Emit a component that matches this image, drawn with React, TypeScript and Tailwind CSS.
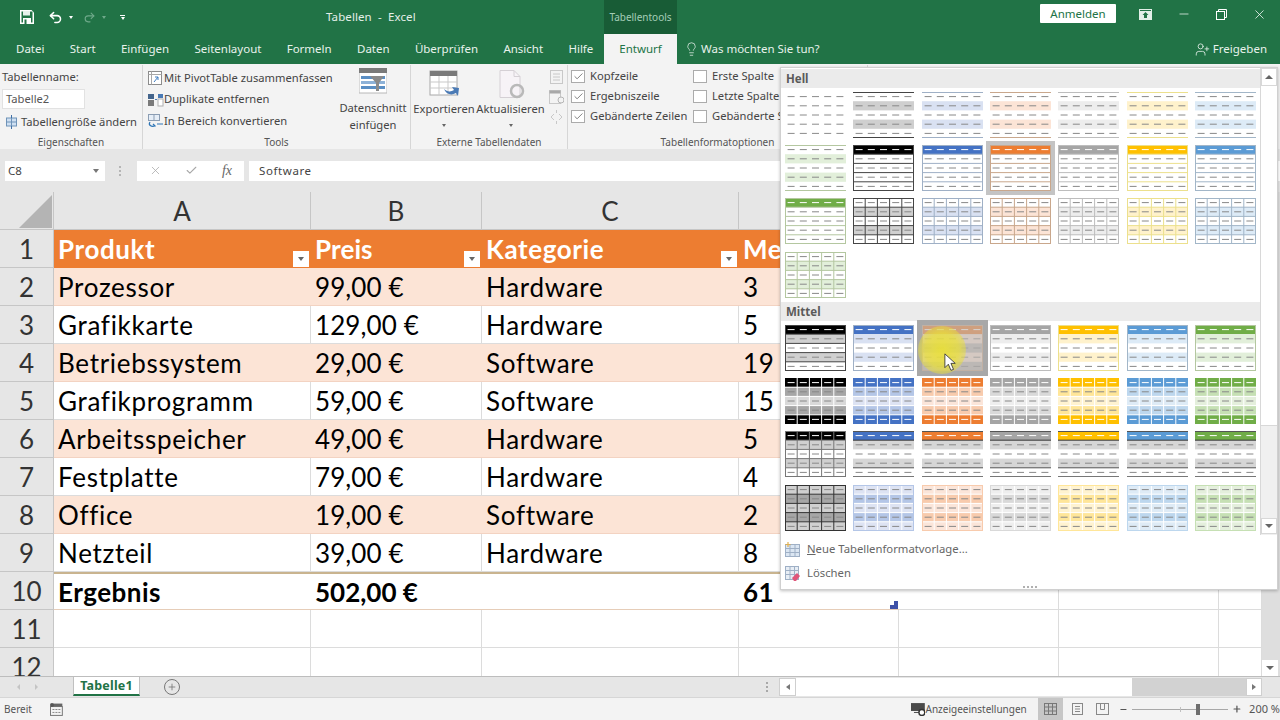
import { Minus, Plus, X, Lightbulb, UserPlus, Check, Undo2, Redo2 } from "lucide-react";
import type { ReactNode } from "react";

type Tone = { head: string; band: string; mid: string; pale: string; line: string };

const TONES: Record<string, Tone> = {
  black: { head: "#000000", band: "#d0d0d0", mid: "#a6a6a6", pale: "#d9d9d9", line: "#454545" },
  blue: { head: "#4472c4", band: "#d9e1f2", mid: "#b4c6e7", pale: "#dde3f3", line: "#9fb0c6" },
  orange: { head: "#ed7d31", band: "#fce4d6", mid: "#f8cbad", pale: "#fbe5d9", line: "#c9a78c" },
  grey: { head: "#a5a5a5", band: "#ededed", mid: "#d9d9d9", pale: "#eeeeee", line: "#bdbdbd" },
  gold: { head: "#ffc000", band: "#fff2cc", mid: "#ffe699", pale: "#fff3d0", line: "#ece08d" },
  sky: { head: "#5b9bd5", band: "#ddebf7", mid: "#bdd7ee", pale: "#deebf6", line: "#a2b6c8" },
  green: { head: "#70ad47", band: "#e2efda", mid: "#c6e0b4", pale: "#e4efdc", line: "#b4c7a0" },
};

const ORDER = ["black", "blue", "orange", "grey", "gold", "sky", "green"];
const R = 9.2;

function Thumb({ tone, kind, dim }: { tone: string; kind: string; dim?: boolean }) {
  const t = TONES[tone];
  const black = tone === "black";
  let fills: (string | null)[] = [null, null, null, null, null];
  let hlines: [number, string][] = [];
  let vline: string | null = null;
  let box: string | null = null;
  let whiteHead = false;
  let whiteFoot = false;

  if (kind === "l1") {
    fills = [null, t.band, null, t.band, null];
    if (black) fills = [null, "#cfcfcf", null, "#cfcfcf", null];
    hlines = [[0.5, t.line], [45.5, t.line]];
  } else if (kind === "l2") {
    fills = [t.head, null, null, null, null];
    hlines = [R, R * 2, R * 3, R * 4].map((y) => [y, t.line] as [number, string]);
    box = t.line;
    whiteHead = true;
  } else if (kind === "l3") {
    fills = [null, t.band, null, t.band, null];
    if (black) fills = [null, "#d0d0d0", null, "#d0d0d0", null];
    hlines = [R, R * 2, R * 3, R * 4].map((y) => [y, t.line] as [number, string]);
    vline = t.line;
    box = t.line;
  } else if (kind === "m1") {
    fills = [t.head, t.band, null, t.band, null];
    if (black) hlines = [[R, "#454545"], [R * 2, "#454545"], [R * 3, "#454545"], [R * 4, "#454545"]];
    box = t.line;
    whiteHead = true;
  } else if (kind === "m2") {
    fills = [t.head, t.mid, t.pale, t.mid, t.head];
    hlines = [R, R * 2, R * 3, R * 4].map((y) => [y, "#ffffff"] as [number, string]);
    vline = "#ffffff";
    whiteHead = true;
    whiteFoot = true;
  } else if (kind === "m3") {
    if (black) {
      fills = [t.head, "#d0d0d0", null, "#d0d0d0", null];
      hlines = [R, R * 2, R * 3, R * 4].map((y) => [y, "#777777"] as [number, string]);
      vline = "#777777";
      box = "#777777";
      whiteHead = true;
    } else {
      fills = [t.head, "#d6d6d6", null, "#d6d6d6", null];
      hlines = [[0.5, "#555555"], [R, "#333333"], [R * 4, "#555555"], [45.5, "#777777"]];
      whiteHead = true;
    }
  } else if (kind === "m4") {
    fills = [t.pale, t.mid, t.pale, t.mid, t.pale];
    if (black) fills = ["#d0d0d0", "#a6a6a6", "#d0d0d0", "#a6a6a6", "#d0d0d0"];
    const l = black ? "#333333" : "#ffffff";
    hlines = [R, R * 2, R * 3, R * 4].map((y) => [y, l] as [number, string]);
    vline = l;
    box = black ? "#333333" : t.mid;
  }

  return (
    <svg width="61" height="46" viewBox="0 0 61 46" className={dim ? "opacity-40" : ""}>
      {fills.map((f, i) => f && <rect key={i} x="0" y={i * R} width="61" height={R} fill={f} />)}
      {hlines.map(([y, c], i) => <line key={i} x1="0" x2="61" y1={y} y2={y} stroke={c} strokeWidth="1" />)}
      {vline && [12.2, 24.4, 36.6, 48.8].map((x) => <line key={x} x1={x} x2={x} y1="0" y2="46" stroke={vline as string} strokeWidth="1" />)}
      {[0, 1, 2, 3, 4].map((i) =>
        [0, 1, 2, 3, 4].map((j) => (
          <line
            key={i + "-" + j}
            x1={2.6 + j * 12.2}
            x2={9.6 + j * 12.2}
            y1={i * R + 4.6}
            y2={i * R + 4.6}
            stroke={(i === 0 && whiteHead) || (i === 4 && whiteFoot) ? "#ffffff" : "#888888"}
            strokeWidth="1"
          />
        ))
      )}
      {box && <rect x="0.5" y="0.5" width="60" height="45" fill="none" stroke={box} strokeWidth="1" />}
    </svg>
  );
}

function Tile({ tone, kind, selected, hovered }: { tone: string; kind: string; selected?: boolean; hovered?: boolean }) {
  return (
    <div className="h-[53.3px] flex items-center justify-center">
      {selected ? (
        <div className="bg-white border-[4px] border-[#c4c4c4] flex"><Thumb tone={tone} kind={kind} /></div>
      ) : hovered ? (
        <div className="bg-[#bcb8b5] border-[5px] border-[#a8a8a8] flex"><Thumb tone={tone} kind={kind} dim /></div>
      ) : (
        <Thumb tone={tone} kind={kind} />
      )}
    </div>
  );
}

function PlainThumb() {
  return (
    <div className="h-[53.3px] flex items-center justify-center">
      <svg width="61" height="46" viewBox="0 0 61 46">
        {[0, 1, 2, 3, 4].map((i) =>
          [0, 1, 2, 3, 4].map((j) => (
            <line key={i + "-" + j} x1={2.6 + j * 12.2} x2={9.6 + j * 12.2} y1={i * R + 4.6} y2={i * R + 4.6} stroke="#8a8a8a" />
          ))
        )}
      </svg>
    </div>
  );
}

function SectionHead({ label }: { label: string }) {
  return <div className="h-[19px] bg-[#ebebeb] pl-[5px] text-[11.5px] leading-[19px] font-bold text-[#5a5a5a]">{label}</div>;
}

function Arrow({ dir }: { dir: "up" | "down" }) {
  return dir === "up" ? (
    <div className="w-0 h-0 border-x-[4px] border-x-transparent border-b-[4px] border-b-[#666666]" />
  ) : (
    <div className="w-0 h-0 border-x-[4px] border-x-transparent border-t-[4px] border-t-[#666666]" />
  );
}

function StylePicker() {
  return (
    <div className="absolute left-[780px] top-[67px] w-[498px] h-[523px] bg-white border border-[#d0d0d0] shadow-[0_1px_3px_rgba(0,0,0,0.25)] flex flex-col z-20">
      <div className="flex h-[467px]">
        <div className="w-[480px] pt-[1px]">
          <SectionHead label="Hell" />
          <div className="grid grid-cols-7 h-[214px] content-start">
            <PlainThumb />
            {ORDER.slice(0, 6).map((c) => <Tile key={c} tone={c} kind="l1" />)}
            <Tile tone="green" kind="l1" />
            {ORDER.slice(0, 6).map((c) => <Tile key={c} tone={c} kind="l2" selected={c === "orange"} />)}
            <Tile tone="green" kind="l2" />
            {ORDER.slice(0, 6).map((c) => <Tile key={c} tone={c} kind="l3" />)}
            <Tile tone="green" kind="l3" />
          </div>
          <SectionHead label="Mittel" />
          <div className="grid grid-cols-7">
            {ORDER.map((c) => <Tile key={c} tone={c} kind="m1" hovered={c === "orange"} />)}
            {ORDER.map((c) => <Tile key={c} tone={c} kind="m2" />)}
            {ORDER.map((c) => <Tile key={c} tone={c} kind="m3" />)}
            {ORDER.map((c) => <Tile key={c} tone={c} kind="m4" />)}
          </div>
        </div>
        <div className="w-[17px] flex flex-col border-l border-[#d8d8d8] bg-[#f0f0f0]">
          <div className="h-[18px] bg-white border border-[#d8d8d8] flex items-center justify-center"><Arrow dir="up" /></div>
          <div className="h-[340px] bg-white border-b border-[#d8d8d8]" />
          <div className="flex-1" />
          <div className="h-[16px] mb-[1px] bg-white border border-[#d8d8d8] flex items-center justify-center"><Arrow dir="down" /></div>
        </div>
      </div>
      <div className="flex-1 flex flex-col pt-[2px] text-[11.3px] text-[#666666]">
        <div className="h-[24px] flex items-center pl-[4px] gap-[7px]">
          <svg width="15" height="15" viewBox="0 0 15 15">
            <rect x="0.5" y="2.5" width="14" height="12" fill="#dbe6f2" stroke="#9fb0c6" />
            <path d="M0.5 6.5h14M0.5 10.5h14M5 2.5v12M10 2.5v12" stroke="#9fb0c6" />
            <path d="M3 0v5M0.5 2.5h5" stroke="#e0b050" strokeWidth="1.2" />
          </svg>
          <span><span className="underline">N</span>eue Tabellenformatvorlage...</span>
        </div>
        <div className="h-[24px] flex items-center pl-[4px] gap-[7px]">
          <svg width="15" height="15" viewBox="0 0 15 15">
            <rect x="0.5" y="0.5" width="13" height="13" fill="#e8eef5" stroke="#9fb0c6" />
            <path d="M0.5 4.5h13M0.5 8.5h13M5 0.5v13M9.5 0.5v13" stroke="#9fb0c6" fill="none" />
            <path d="M7 12l5-5 3 3-4 5H9z" fill="#e0567a" />
          </svg>
          <span>Löschen</span>
        </div>
        <div className="flex justify-center gap-[2px] pl-[1px] pt-[1px]">
          {[0, 1, 2, 3].map((i) => <div key={i} className="w-[2px] h-[2px] bg-[#b0b0b0]" />)}
        </div>
      </div>
    </div>
  );
}

function Cursor() {
  return (
    <>
      <div className="absolute left-[918px] top-[326px] w-[48px] h-[48px] rounded-full z-30 bg-[radial-gradient(circle,rgba(236,226,50,0.9)_0%,rgba(236,226,50,0.72)_50%,rgba(236,226,50,0)_100%)]" />
      <svg className="absolute left-[944px] top-[353px] z-40" width="13" height="19" viewBox="0 0 15 22">
        <path d="M1 1v16l4-4 3 7 3-1-3-7h5z" fill="#ffffff" stroke="#333333" strokeWidth="1" />
      </svg>
    </>
  );
}

function TitleBar() {
  return (
    <div className="h-[34px] flex text-white">
      <div className="w-[326px] flex items-center pl-[20px]">
        <svg width="14" height="14" viewBox="0 0 14 14">
          <path d="M0 0h11.5l2.5 2.5V14H0z" fill="#ffffff" />
          <rect x="1.5" y="1.5" width="11" height="11" fill="#217346" />
          <rect x="3" y="1" width="7" height="4.5" fill="#e8f2ec" />
          <rect x="3" y="8" width="8" height="6" fill="#ffffff" />
          <rect x="4.5" y="9.5" width="2" height="4.5" fill="#217346" />
        </svg>
        <Undo2 className="w-[15px] h-[15px] ml-[14px]" strokeWidth={2.5} />
        <div className="ml-[6px] w-0 h-0 border-x-[2.5px] border-x-transparent border-t-[3px] border-t-white" />
        <Redo2 className="w-[13px] h-[13px] ml-[10px] text-[#6fa98a]" strokeWidth={2} />
        <div className="ml-[6px] w-0 h-0 border-x-[2.5px] border-x-transparent border-t-[3px] border-t-[#6fa98a]" />
        <div className="ml-[14px] flex flex-col items-center gap-[1px]">
          <div className="w-[5px] h-[1px] bg-white" />
          <div className="w-0 h-0 border-x-[2.5px] border-x-transparent border-t-[3px] border-t-white" />
        </div>
      </div>
      <div className="w-[278px] flex items-center text-[11.5px] text-[#e4efe9] tracking-[0.1px] whitespace-pre">Tabellen  -  Excel</div>
      <div className="w-[73px] bg-[#185c36] flex items-center justify-center text-[10px] text-[#a4cdb6]">Tabellentools</div>
      <div className="w-[363px]" />
      <div className="w-[76px] h-[19px] mt-[4px] bg-white rounded-[1px] flex items-center justify-center text-[11.5px] text-[#217346]">Anmelden</div>
      <div className="flex-1 flex items-center justify-between pl-[23px] pr-[13px] pb-[6px]">
        <svg width="13" height="11" viewBox="0 0 13 11">
          <path d="M0 0h13v11H0z" fill="#e2efe8" />
          <path d="M6.5 3l3 3H8v3H5V6H3.5z" fill="#217346" />
          <path d="M1 1.5h11" stroke="#217346" />
        </svg>
        <Minus className="w-[14px] h-[14px]" strokeWidth={1.2} />
        <svg width="11" height="11" viewBox="0 0 11 11" fill="none" stroke="#ffffff">
          <rect x="0.5" y="2.5" width="8" height="8" fill="#217346" />
          <path d="M2.5 2.5v-2h8v8h-2" />
        </svg>
        <X className="w-[15px] h-[15px]" strokeWidth={1.2} />
      </div>
    </div>
  );
}

function TabBar() {
  const tabs = ["Datei", "Start", "Einfügen", "Seitenlayout", "Formeln", "Daten", "Überprüfen", "Ansicht", "Hilfe"];
  return (
    <div className="h-[30px] flex items-stretch text-[11.5px] text-[#e8f2ec]">
      <div className="w-[604px] flex items-center gap-[25.3px] pl-[16px]">
        {tabs.map((t) => <span key={t}>{t}</span>)}
      </div>
      <div className="w-[73px] bg-[#f3f3f3] flex items-center justify-center text-[#217346]">Entwurf</div>
      <div className="flex items-center pl-[7px]">
        <Lightbulb className="w-[15px] h-[18px]" strokeWidth={1.2} />
        <span className="ml-[2px]">Was möchten Sie tun?</span>
      </div>
      <div className="flex-1 flex items-center justify-end pr-[13px]">
        <UserPlus className="w-[15px] h-[15px] mr-[3px]" strokeWidth={1.3} />
        <span>Freigeben</span>
      </div>
    </div>
  );
}

function Group({ label, w, children }: { label: string; w: string; children: ReactNode }) {
  return (
    <div className={"flex flex-col border-r border-[#d6d6d6] h-[84px] shrink-0 " + w}>
      <div className="flex-1 flex min-h-0">{children}</div>
      <div className="h-[14px] text-center text-[10px] leading-[14px] text-[#555555] whitespace-nowrap overflow-hidden">{label}</div>
    </div>
  );
}

function CheckRow({ label, on }: { label: string; on: boolean }) {
  return (
    <div className="h-[20px] flex items-center whitespace-nowrap">
      <div className="w-[14px] h-[13px] border border-[#ababab] bg-white flex items-center justify-center">
        {on && <Check className="w-[11px] h-[11px] text-[#555555]" strokeWidth={1.6} />}
      </div>
      <span className="ml-[5px]">{label}</span>
    </div>
  );
}

function Ribbon() {
  return (
    <div className="h-[85px] bg-[#f3f3f3] pt-[1px] flex text-[11.2px] text-[#444444] overflow-hidden">
      <Group label="Eigenschaften" w="w-[143px]">
        <div className="flex flex-col pl-[2px] pt-[3px]">
          <div className="h-[18px] leading-[18px]">Tabellenname:</div>
          <div className="mt-[3px] w-[83px] h-[20px] bg-white border border-[#e2e2e2] pl-[3px] leading-[18px] text-[#555555]">Tabelle2</div>
          <div className="mt-[3px] flex items-center h-[20px] whitespace-nowrap">
            <svg className="ml-[3px] mr-[3px]" width="13" height="14" viewBox="0 0 13 14" fill="none">
              <rect x="1.5" y="3" width="10" height="8" fill="#cfe0f2" stroke="#6f93b8" />
              <path d="M1.5 7h10M6.5 3v8" stroke="#6f93b8" />
              <path d="M6.5 0v3M6.5 11v3" stroke="#3e6fa8" />
            </svg>
            Tabellengröße ändern
          </div>
        </div>
      </Group>
      <Group label="Tools" w="w-[268px]">
        <div className="flex flex-col pl-[4px] pt-[2px] w-[193px] whitespace-nowrap">
          <div className="h-[22px] flex items-center gap-[1px]">
            <svg width="16" height="14" viewBox="0 0 16 14" fill="none">
              <rect x="1.5" y="0.5" width="13" height="13" fill="#ffffff" stroke="#8c8c8c" />
              <path d="M1.5 3.5h13M4.5 0.5v13" stroke="#a8a8a8" />
              <path d="M7 11l4-5M11 6v3M11 6H8" stroke="#3e7cc0" />
            </svg>
            Mit PivotTable zusammenfassen
          </div>
          <div className="h-[21px] flex items-center">
            <svg width="17" height="14" viewBox="0 0 17 14">
              <rect x="1" y="1" width="6" height="5" fill="#43648c" />
              <rect x="1" y="7" width="6" height="6" fill="#7a7a7a" />
              <rect x="11" y="1" width="5" height="4" fill="#4a7ab5" />
              <rect x="11" y="6" width="5" height="7" fill="#ffffff" stroke="#b0b0b0" />
              <rect x="8" y="6" width="2" height="1" fill="#4a7ab5" />
            </svg>
            Duplikate entfernen
          </div>
          <div className="h-[22px] flex items-center">
            <svg width="17" height="14" viewBox="0 0 17 14" fill="none">
              <rect x="1.5" y="0.5" width="11" height="6" fill="#e6eef7" stroke="#8b9db3" />
              <path d="M7 0.5v6" stroke="#8b9db3" />
              <path d="M3 8c-2 3 1 5 5 4l-2-2M16 10H10" stroke="#2e75b6" strokeWidth="1.2" />
            </svg>
            In Bereich konvertieren
          </div>
        </div>
        <div className="w-[74px] flex flex-col items-center pt-[3px]">
          <svg width="28" height="26" viewBox="0 0 28 26">
            <rect x="0" y="0" width="28" height="25" fill="#ffffff" stroke="#b8b8b8" />
            <rect x="0" y="0" width="28" height="5" fill="#7a7a7a" />
            <rect x="2" y="8" width="24" height="3" fill="#5b8fc4" />
            <rect x="2" y="13" width="24" height="3" fill="#8db2d8" />
            <rect x="2" y="18" width="24" height="3" fill="#5b8fc4" />
            <path d="M11 8h14l-5 7v8h-3v-8z" fill="#8a8a8a" />
          </svg>
          <div className="text-center leading-[17px] mt-[5px]">Datenschnitt<br />einfügen</div>
        </div>
      </Group>
      <Group label="Externe Tabellendaten" w="w-[157px]">
        <div className="w-[66px] flex flex-col items-center pt-[5px]">
          <svg width="31" height="29" viewBox="0 0 31 29" fill="none">
            <rect x="1" y="1" width="27" height="24" fill="#ffffff" stroke="#a8a8a8" />
            <rect x="1" y="1" width="27" height="5" fill="#7a7a7a" />
            <path d="M1 12h27M1 18h27M10 6v19M19 6v19" stroke="#c9c9c9" />
            <path d="M15 19c3 3 7 3 10 1l-2-3 7 1-1 8-2-3c-5 3-10 1-12-4z" fill="#4a7ab5" />
          </svg>
          <div className="mt-[2px] leading-[16px]">Exportieren</div>
          <div className="mt-[7px] w-0 h-0 border-x-[2.5px] border-x-transparent border-t-[3px] border-t-[#666666]" />
        </div>
        <div className="w-[67px] flex flex-col items-center pt-[5px]">
          <svg width="28" height="29" viewBox="0 0 28 29" fill="none">
            <path d="M3 0.5h14l6 6v21H3z" fill="#f7f3f7" stroke="#d5d0d5" />
            <path d="M17 0.5v6h6" stroke="#d5d0d5" />
            <circle cx="20" cy="21" r="6" stroke="#b9b9b9" strokeWidth="2.5" />
          </svg>
          <div className="mt-[2px] leading-[16px]">Aktualisieren</div>
          <div className="mt-[7px] w-0 h-0 border-x-[2.5px] border-x-transparent border-t-[3px] border-t-[#666666]" />
        </div>
        <div className="flex flex-col gap-[6px] items-center pt-[5px] pl-[5px]">
          <svg width="13" height="14" viewBox="0 0 13 14" fill="none"><rect x="0.5" y="0.5" width="12" height="13" stroke="#c8c8c8" /><path d="M3 4h7M3 7h7M3 10h7" stroke="#c8c8c8" /></svg>
          <svg width="15" height="14" viewBox="0 0 15 14" fill="none"><rect x="0.5" y="0.5" width="11" height="13" stroke="#c8c8c8" /><rect x="0.5" y="0.5" width="11" height="3" fill="#a8a8a8" /><circle cx="12" cy="10" r="3" fill="#f3f3f3" stroke="#b5b5b5" /></svg>
          <svg width="13" height="14" viewBox="0 0 13 14" fill="none"><path d="M4 4L1 7l3 3M9 4l3 3-3 3M6.5 0v3M6.5 11v3" stroke="#c8c8c8" /></svg>
        </div>
      </Group>
      <Group label="Tabellenformatoptionen" w="w-[300px]">
        <div className="flex pl-[3px] pt-[1px] text-[#444444]">
          <div className="w-[122px]">
            <CheckRow label="Kopfzeile" on />
            <CheckRow label="Ergebniszeile" on />
            <CheckRow label="Gebänderte Zeilen" on />
          </div>
          <div>
            <CheckRow label="Erste Spalte" on={false} />
            <CheckRow label="Letzte Spalte" on={false} />
            <CheckRow label="Gebänderte Spalten" on={false} />
          </div>
        </div>
      </Group>
    </div>
  );
}

function FormulaBar() {
  return (
    <div className="h-[43px] bg-[#e6e6e6] flex items-center text-[11.5px] text-[#444444]">
      <div className="ml-[5px] w-[100px] h-[20px] bg-white flex items-center justify-between pl-[3px] pr-[6px]">
        C8
        <div className="w-0 h-0 border-x-[3.5px] border-x-transparent border-t-[4px] border-t-[#777777]" />
      </div>
      <div className="ml-[14px] flex flex-col gap-[2px]">
        {[0, 1, 2].map((i) => <div key={i} className="w-[2px] h-[2px] bg-[#b5b5b5]" />)}
      </div>
      <div className="ml-[16px] w-[107px] h-[20px] bg-white flex items-center justify-between pl-[12px] pr-[12px]">
        <X className="w-[13px] h-[13px] text-[#a8a8a8]" strokeWidth={1.4} />
        <Check className="w-[13px] h-[13px] text-[#a8a8a8]" strokeWidth={2} />
        <span className="font-['Liberation_Serif',serif] italic text-[14px] text-[#666666]">fx</span>
      </div>
      <div className="ml-[5px] flex-1 h-[20px] bg-white pl-[10px] leading-[20px] tracking-[0.6px]">Software</div>
    </div>
  );
}

const ROWS: [string, string, string, string][] = [
  ["Prozessor", "99,00 €", "Hardware", "3"],
  ["Grafikkarte", "129,00 €", "Hardware", "5"],
  ["Betriebssystem", "29,00 €", "Software", "19"],
  ["Grafikprogramm", "59,00 €", "Software", "15"],
  ["Arbeitsspeicher", "49,00 €", "Hardware", "5"],
  ["Festplatte", "79,00 €", "Hardware", "4"],
  ["Office", "19,00 €", "Software", "2"],
  ["Netzteil", "39,00 €", "Hardware", "8"],
];

// every sheet row is one fixed 38px track, the text line may be a bit taller
const COLS = "grid grid-rows-[38px] grid-cols-[54px_257px_171px_257px_160px_160px_160px_43px]";

function RowHead({ n }: { n: number }) {
  return <div className="bg-[#e6e6e6] border-b border-r border-[#c6c6c6] text-center text-[#333333] font-normal leading-[38px]">{n}</div>;
}

function FilterBtn() {
  return (
    <div className="absolute right-[2px] bottom-[1px] w-[16px] h-[16px] bg-white flex items-center justify-center">
      <div className="w-0 h-0 border-x-[3.5px] border-x-transparent border-t-[4px] border-t-[#666666]" />
    </div>
  );
}

function Sheet() {
  const plainCell = "border-r border-b border-[#dcdcdc] bg-white";
  return (
    <div className="flex h-[484px]">
      <div className="w-[1262px] overflow-hidden font-['Lato',sans-serif] text-[26px] text-black relative">
        <div className={COLS + " h-[38px] bg-[#e6e6e6] text-[#333333]"}>
          <div className="border-r border-b border-[#c6c6c6] flex items-end justify-end pr-[1px] pb-[1px]">
            <div className="w-0 h-0 border-l-[33px] border-l-transparent border-b-[33px] border-b-[#b4b4b4]" />
          </div>
          {["A", "B", "C", "D", "E", "F", "G"].map((c) => (
            <div key={c} className="border-r border-b border-[#c6c6c6] text-center leading-[38px]">{c}</div>
          ))}
        </div>
        <div className={COLS + " h-[38px] font-bold"}>
          <RowHead n={1} />
          {["Produkt", "Preis", "Kategorie", "Menge"].map((h, i) => (
            <div key={h} className={"relative bg-[#ed7d31] text-white pl-[4px] leading-[39px] overflow-hidden " + (i === 1 ? "tracking-[0.1px]" : "tracking-[0.6px]")}>
              {h}
              {i < 3 && <FilterBtn />}
            </div>
          ))}
          <div className={plainCell} /><div className={plainCell} /><div className={plainCell} />
        </div>
        {ROWS.map((r, i) => {
          const banded = i % 2 === 0;
          const cell = banded
            ? "bg-[#fce4d6] border-b border-[#f3d3c2] pl-[4px] leading-[39px] "
            : "bg-white border-b border-r border-[#dcdcdc] pl-[4px] leading-[39px] ";
          return (
            <div key={r[0]} className={COLS + " h-[38px]"}>
              <RowHead n={i + 2} />
              {r.map((v, j) => <div key={j} className={cell + (j === 1 ? "tracking-[0.1px]" : "tracking-[0.7px]")}>{v}</div>)}
              <div className={plainCell} /><div className={plainCell} /><div className={plainCell} />
            </div>
          );
        })}
        <div className={COLS + " h-[38px] font-bold"}>
          <RowHead n={10} />
          {["Ergebnis", "502,00 €", "", "61"].map((v, j) => (
            <div key={j} className={"bg-white border-t-[2px] border-b border-t-[#c9b48f] border-b-[#e6cdb8] pl-[4px] leading-[36px] " + (j === 1 ? "tracking-[0px]" : "tracking-[0.5px]")}>{v}</div>
          ))}
          <div className={plainCell} /><div className={plainCell} /><div className={plainCell} />
        </div>
        {[11, 12].map((n) => (
          <div key={n} className={COLS + " h-[38px]"}>
            <RowHead n={n} />
            {[0, 1, 2, 3, 4, 5, 6].map((j) => <div key={j} className={plainCell} />)}
          </div>
        ))}
        <div className="absolute left-[890px] top-[409px] w-[8px] h-[8px] bg-[#3f51a8]">
          <div className="w-[4px] h-[4px] bg-white" />
        </div>
      </div>
      <div className="flex-1 bg-[#dedede] flex flex-col justify-end">
        <div className="h-[16px] w-[16px] bg-white flex items-center justify-center"><Arrow dir="down" /></div>
      </div>
    </div>
  );
}

function SheetBar() {
  return (
    <div className="h-[21px] bg-[#e6e6e6] border-t border-[#bdbdbd] flex items-stretch text-[12.5px]">
      <div className="w-[73px] flex items-center gap-[15px] pl-[17px]">
        <div className="w-0 h-0 border-y-[3px] border-y-transparent border-r-[3px] border-r-[#c4c4c4]" />
        <div className="w-0 h-0 border-y-[3px] border-y-transparent border-l-[3px] border-l-[#c4c4c4]" />
      </div>
      <div className="w-[67px] h-[19px] bg-white border-x border-b-[2px] border-x-[#c0c0c0] border-b-[#217346] text-center font-bold tracking-[0.2px] text-[#217346] leading-[17px]">Tabelle1</div>
      <div className="ml-[24px] mt-[2px] w-[16px] h-[16px] rounded-full border border-[#777777] flex items-center justify-center">
        <Plus className="w-[10px] h-[10px] text-[#777777]" strokeWidth={2} />
      </div>
      <div className="ml-[586px] flex flex-col justify-center gap-[2px]">
        {[0, 1, 2].map((i) => <div key={i} className="w-[2px] h-[2px] bg-[#a8a8a8]" />)}
      </div>
      <div className="ml-[11px] w-[483px] flex my-[1px]">
        <div className="w-[17px] bg-white border border-[#cfcfcf] flex items-center justify-center">
          <div className="w-0 h-0 border-y-[3.5px] border-y-transparent border-r-[4px] border-r-[#777777]" />
        </div>
        <div className="w-[336px] bg-white" />
        <div className="flex-1 bg-[#d2d2d2]" />
        <div className="w-[16px] bg-white border border-[#cfcfcf] flex items-center justify-center">
          <div className="w-0 h-0 border-y-[3.5px] border-y-transparent border-l-[4px] border-l-[#777777]" />
        </div>
      </div>
    </div>
  );
}

function StatusBar() {
  return (
    <div className="h-[23px] bg-[#f3f3f3] border-t border-[#d6d6d6] flex items-center text-[10px] text-[#555555]">
      <span className="ml-[4px]">Bereit</span>
      <svg className="ml-[18px]" width="13" height="13" viewBox="0 0 13 13" fill="none">
        <rect x="0.5" y="3.5" width="12" height="9" stroke="#777777" />
        <rect x="3" y="0.5" width="9.5" height="3" fill="#666666" />
        <circle cx="2" cy="2" r="2" fill="#555555" />
        <path d="M2.5 6.5h8M2.5 9.5h8" stroke="#888888" strokeDasharray="2 1" />
      </svg>
      <svg className="ml-[848px]" width="14" height="14" viewBox="0 0 14 14">
        <rect x="0" y="1" width="14" height="8" fill="#4a4a4a" />
        <rect x="3" y="10" width="6" height="1" fill="#4a4a4a" />
        <circle cx="11" cy="10.5" r="3" fill="#ffffff" stroke="#333333" strokeWidth="1.5" />
      </svg>
      <span className="ml-[1px]">Anzeigeeinstellungen</span>
      <div className="ml-[11px] w-[26px] h-[22px] bg-[#c6c6c6] flex items-center justify-center">
        <svg width="13" height="12" viewBox="0 0 13 12" fill="none" stroke="#777777"><rect x="0.5" y="0.5" width="12" height="11" /><path d="M0.5 4h12M0.5 8h12M4.5 0.5v11M8.5 0.5v11" /></svg>
      </div>
      <div className="w-[26px] flex justify-center ml-[1px]">
        <svg width="13" height="12" viewBox="0 0 13 12" fill="none" stroke="#888888"><rect x="1.5" y="0.5" width="10" height="11" /><path d="M4 3.5h5M4 6h5M4 8.5h5" /></svg>
      </div>
      <div className="w-[26px] flex justify-center">
        <svg width="13" height="12" viewBox="0 0 13 12" fill="none" stroke="#888888"><rect x="0.5" y="0.5" width="12" height="11" /><path d="M4.5 0.5v6h4v-6" /></svg>
      </div>
      <Minus className="w-[9px] h-[9px] ml-[3px] text-[#555555]" strokeWidth={3} />
      <div className="ml-[4px] w-[98px] h-[1px] bg-[#a8a8a8] relative">
        <div className="absolute left-[48px] -top-[2px] w-[1px] h-[5px] bg-[#c0c0c0]" />
        <div className="absolute left-[64px] -top-[5px] w-[4px] h-[11px] bg-[#6e6e6e]" />
      </div>
      <Plus className="w-[10px] h-[10px] ml-[4px] text-[#555555]" strokeWidth={3} />
      <span className="ml-[7px] text-[11px] whitespace-nowrap">200 %</span>
    </div>
  );
}

export default function App() {
  return (
    <div className="relative w-[1280px] h-[720px] overflow-hidden bg-white font-['Noto_Sans',sans-serif]">
      <div className="bg-[#217346]">
        <TitleBar />
        <TabBar />
      </div>
      <Ribbon />
      <FormulaBar />
      <Sheet />
      <SheetBar />
      <StatusBar />
      <StylePicker />
      <Cursor />
    </div>
  );
}
